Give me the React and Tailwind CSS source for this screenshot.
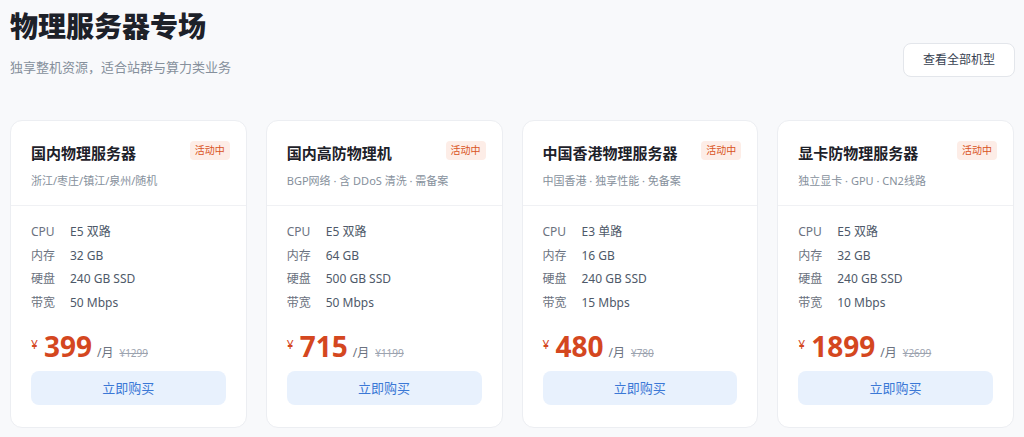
const servers = [
  {
    name: "国内物理服务器",
    desc: "浙江/枣庄/镇江/泉州/随机",
    specs: [
      ["CPU", "E5 双路"],
      ["内存", "32 GB"],
      ["硬盘", "240 GB SSD"],
      ["带宽", "50 Mbps"],
    ],
    price: "399",
    old: "¥1299",
  },
  {
    name: "国内高防物理机",
    desc: "BGP网络 · 含 DDoS 清洗 · 需备案",
    specs: [
      ["CPU", "E5 双路"],
      ["内存", "64 GB"],
      ["硬盘", "500 GB SSD"],
      ["带宽", "50 Mbps"],
    ],
    price: "715",
    old: "¥1199",
  },
  {
    name: "中国香港物理服务器",
    desc: "中国香港 · 独享性能 · 免备案",
    specs: [
      ["CPU", "E3 单路"],
      ["内存", "16 GB"],
      ["硬盘", "240 GB SSD"],
      ["带宽", "15 Mbps"],
    ],
    price: "480",
    old: "¥780",
  },
  {
    name: "显卡防物理服务器",
    desc: "独立显卡 · GPU · CN2线路",
    specs: [
      ["CPU", "E5 双路"],
      ["内存", "32 GB"],
      ["硬盘", "240 GB SSD"],
      ["带宽", "10 Mbps"],
    ],
    price: "1899",
    old: "¥2699",
  },
];

function ServerCard({ item }) {
  return (
    <div className="bg-white border border-[#eceef2] rounded-xl flex flex-col">
      <div className="pl-5 pr-4 pt-5 pb-4 border-b border-[#f0f1f4]">
        <div className="flex items-start justify-between">
          <h3 className="text-[15px] font-bold text-[#1d2129] mt-px leading-[22px]">{item.name}</h3>
          <span className="text-[10px] leading-[15px] px-[5px] py-0.5 rounded bg-[#fdede7] text-[#d9541e]">
            活动中
          </span>
        </div>
        <p className="mt-[9px] text-[11px] leading-4 text-[#86909c]">{item.desc}</p>
      </div>
      <div className="px-5 pt-[14px] pb-[22px]">
        <div className="flex flex-col">
          {item.specs.map(([k, v]) => (
            <div key={k} className="flex text-[12px] leading-[23.6px]">
              <span className="w-[39px] text-[#6b7280]">{k}</span>
              <span className="text-[#4e5969]">{v}</span>
            </div>
          ))}
        </div>
        <div className="mt-[14px] flex items-baseline h-[36px]">
          <span className="text-[12px] text-[#d4471f] mr-[6px] relative -top-[8px]">¥</span>
          <span className="text-[28px] leading-[36px] font-bold text-[#d4471f]">{item.price}</span>
          <span className="text-[12px] text-[#6b7280] ml-[5px]">/月</span>
          <span className="text-[10px] text-[#9ca3af] line-through ml-[6px]">{item.old}</span>
        </div>
        <button className="mt-[7px] w-full h-[34px] rounded-lg bg-[#e8f1fd] text-[13px] text-[#3b78d6]">
          立即购买
        </button>
      </div>
    </div>
  );
}

export default function App() {
  return (
    <div
      className="min-h-screen bg-[#f8f9fb] px-[10px] pt-[9px] pb-4"
      style={{ fontFamily: '"Noto Sans", "Noto Sans CJK SC", sans-serif' }}
    >
      <header className="flex items-end justify-between">
        <div>
          <h1 className="text-[28px] leading-[35px] font-extrabold text-[#1d2129]">物理服务器专场</h1>
          <p className="mt-[13px] text-[13px] leading-5 text-[#86909c]">独享整机资源，适合站群与算力类业务</p>
        </div>
        <button className="-mr-px h-[34px] w-[112px] rounded-lg bg-white border border-[#e3e6eb] text-[12px] text-[#374151]">
          查看全部机型
        </button>
      </header>
      <div className="mt-[43px] grid grid-cols-4 gap-[19px]">
        {servers.map((s) => (
          <ServerCard key={s.name} item={s} />
        ))}
      </div>
    </div>
  );
}
